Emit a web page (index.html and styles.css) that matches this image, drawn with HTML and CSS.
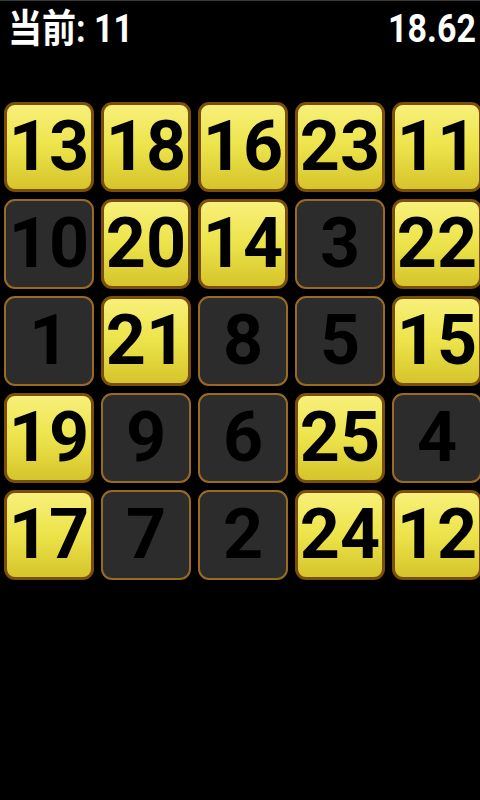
FILE: index.html
```html
<!DOCTYPE html>
<html lang="zh-CN">
<head>
    <meta charset="UTF-8">
    <meta name="viewport" content="width=device-width, initial-scale=1.0">
    <title>舒尔特方格</title>
    <link rel="stylesheet" href="styles.css">
</head>
<body>
    <div class="top-bar">
        <div class="current">当前: 11</div>
        <div class="timer">18.62</div>
    </div>

    <div class="board">
        <div class="cell on">13</div>
        <div class="cell on">18</div>
        <div class="cell on">16</div>
        <div class="cell on">23</div>
        <div class="cell on">11</div>

        <div class="cell">10</div>
        <div class="cell on">20</div>
        <div class="cell on">14</div>
        <div class="cell">3</div>
        <div class="cell on">22</div>

        <div class="cell">1</div>
        <div class="cell on">21</div>
        <div class="cell">8</div>
        <div class="cell">5</div>
        <div class="cell on">15</div>

        <div class="cell on">19</div>
        <div class="cell">9</div>
        <div class="cell">6</div>
        <div class="cell on">25</div>
        <div class="cell">4</div>

        <div class="cell on">17</div>
        <div class="cell">7</div>
        <div class="cell">2</div>
        <div class="cell on">24</div>
        <div class="cell on">12</div>
    </div>
</body>
</html>
```

FILE: styles.css
```css
body {
    margin: 0;
    height: 800px;
    overflow: hidden;
    background: #000;
    color: #fff;
    font-family: Roboto, "Noto Sans CJK SC", sans-serif;
    border-top: 1px solid #3a3a3a; /* 顶部细线 */
    box-sizing: border-box;
}

.top-bar {
    display: flex;
    justify-content: space-between;
    align-items: center;
    height: 54px;
    padding: 0 4px 0 8px;
    font-size: 34px;
    font-weight: bold;
    line-height: 1;
}

.top-bar div {
    transform: scaleY(1.15); /* 字体偏高 */
}

.board {
    display: grid;
    grid-template-columns: repeat(5, 90px);
    grid-auto-rows: 90px;
    gap: 7px;
    margin-top: 47px;
    padding-left: 4px;
    width: 500px;
}

.cell {
    display: flex;
    align-items: center;
    justify-content: center;
    box-sizing: border-box;
    border: 2px solid #9a6a22;
    border-radius: 11px;
    background: #2c2c2c;
    color: #000;
    font-size: 70px;
    font-weight: bold;
    line-height: 1;
    padding-bottom: 2px;
    white-space: nowrap;
}

.cell.on {
    border: 3px solid #7a4e0c;
    background: linear-gradient(to bottom, #f8f07a, #ece34a 50%, #d6c42c);
}
```
